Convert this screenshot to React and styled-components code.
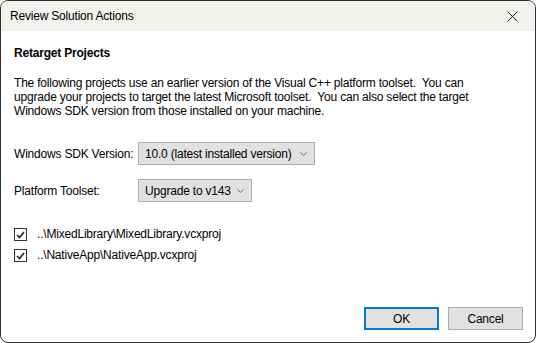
import styled, { createGlobalStyle } from 'styled-components';

const GlobalStyle = createGlobalStyle`
    html, body {
        margin: 0;
        padding: 0;
        background: #ffffff;
    }
    * {
        box-sizing: border-box;
    }
`;

const Window = styled.div`
    width: 536px;
    height: 343px;
    display: flex;
    flex-direction: column;
    border: 1px solid #2e2e2e;
    border-radius: 8px;
    overflow: hidden;
    background: #ffffff;
    font-family: 'Liberation Sans', Arial, sans-serif;
    font-size: 12px;
    letter-spacing: -0.2px;
    color: #000000;
`;

const TitleBar = styled.div`
    height: 30px;
    flex-shrink: 0;
    display: flex;
    align-items: center;
    justify-content: space-between;
    padding: 0 0 0 9px;
    background: #f3f2ee;
`;

const Title = styled.div`
    font-size: 12px;
`;

const CloseButton = styled.div`
    width: 46px;
    height: 30px;
    display: flex;
    align-items: center;
    justify-content: center;
`;

const Body = styled.div`
    flex: 1;
    display: flex;
    flex-direction: column;
    padding: 15px 12px 12px 13px;
`;

const Heading = styled.div`
    font-weight: 700;
    line-height: 14px;
`;

const Paragraph = styled.p`
    margin: 16px 0 0;
    line-height: 14px;
`;

const Form = styled.div`
    display: grid;
    grid-template-columns: 124px auto;
    row-gap: 14px;
    align-items: center;
    justify-items: start;
    margin-top: 24px;
`;

const Label = styled.div`
    line-height: 14px;
`;

const Select = styled.div`
    width: ${(props) => props.width}px;
    height: 23px;
    display: flex;
    align-items: center;
    justify-content: space-between;
    padding: 0 7px 0 6px;
    background: #e1e1e1;
    border: 1px solid #adadad;
`;

const CheckList = styled.div`
    display: flex;
    flex-direction: column;
    gap: 8px;
    margin-top: 26px;
`;

const CheckRow = styled.label`
    display: flex;
    align-items: center;
    gap: 10px;
    line-height: 13px;
`;

const Box = styled.span`
    width: 13px;
    height: 13px;
    display: flex;
    align-items: center;
    justify-content: center;
    border: 1px solid #333333;
    background: #ffffff;
`;

const Footer = styled.div`
    margin-top: auto;
    display: flex;
    justify-content: flex-end;
    gap: 9px;
`;

const Button = styled.button`
    width: 75px;
    height: 23px;
    padding: 0;
    font-family: inherit;
    font-size: 12px;
    letter-spacing: inherit;
    color: #000000;
    background: #e1e1e1;
    border: 1px solid ${(props) => (props.primary ? '#0078d7' : '#adadad')};
    box-shadow: ${(props) => (props.primary ? 'inset 0 0 0 1px #0078d7' : 'none')};
`;

function Chevron() {
    return (
        <svg width="7" height="4" viewBox="0 0 7 4">
            <path d="M0.5 0.5 L3.5 3.5 L6.5 0.5" fill="none" stroke="#6b6b6b" strokeWidth="1" />
        </svg>
    );
}

function CheckMark() {
    return (
        <svg width="9" height="8" viewBox="0 0 9 8">
            <path d="M1 4 L3.5 6.5 L8 1" fill="none" stroke="#222" strokeWidth="1.6" />
        </svg>
    );
}

const projects = [
    '..\\MixedLibrary\\MixedLibrary.vcxproj',
    '..\\NativeApp\\NativeApp.vcxproj',
];

export default function App() {
    return (
        <>
            <GlobalStyle />
            <Window>
                <TitleBar>
                    <Title>Review Solution Actions</Title>
                    <CloseButton>
                        <svg width="11" height="11" viewBox="0 0 11 11">
                            <path d="M0.5 0.5 L10.5 10.5 M10.5 0.5 L0.5 10.5" stroke="#1a1a1a" strokeWidth="1" />
                        </svg>
                    </CloseButton>
                </TitleBar>
                <Body>
                    <Heading>Retarget Projects</Heading>
                    <Paragraph>
                        The following projects use an earlier version of the Visual C++ platform toolset.&nbsp; You can
                        <br />
                        upgrade your projects to target the latest Microsoft toolset.&nbsp; You can also select the target
                        <br />
                        Windows SDK version from those installed on your machine.
                    </Paragraph>
                    <Form>
                        <Label>Windows SDK Version:</Label>
                        <Select width={177}>
                            <span>10.0 (latest installed version)</span>
                            <Chevron />
                        </Select>
                        <Label>Platform Toolset:</Label>
                        <Select width={114}>
                            <span>Upgrade to v143</span>
                            <Chevron />
                        </Select>
                    </Form>
                    <CheckList>
                        {projects.map((p) => (
                            <CheckRow key={p}>
                                <Box>
                                    <CheckMark />
                                </Box>
                                <span>{p}</span>
                            </CheckRow>
                        ))}
                    </CheckList>
                    <Footer>
                        <Button primary>OK</Button>
                        <Button>Cancel</Button>
                    </Footer>
                </Body>
            </Window>
        </>
    );
}
